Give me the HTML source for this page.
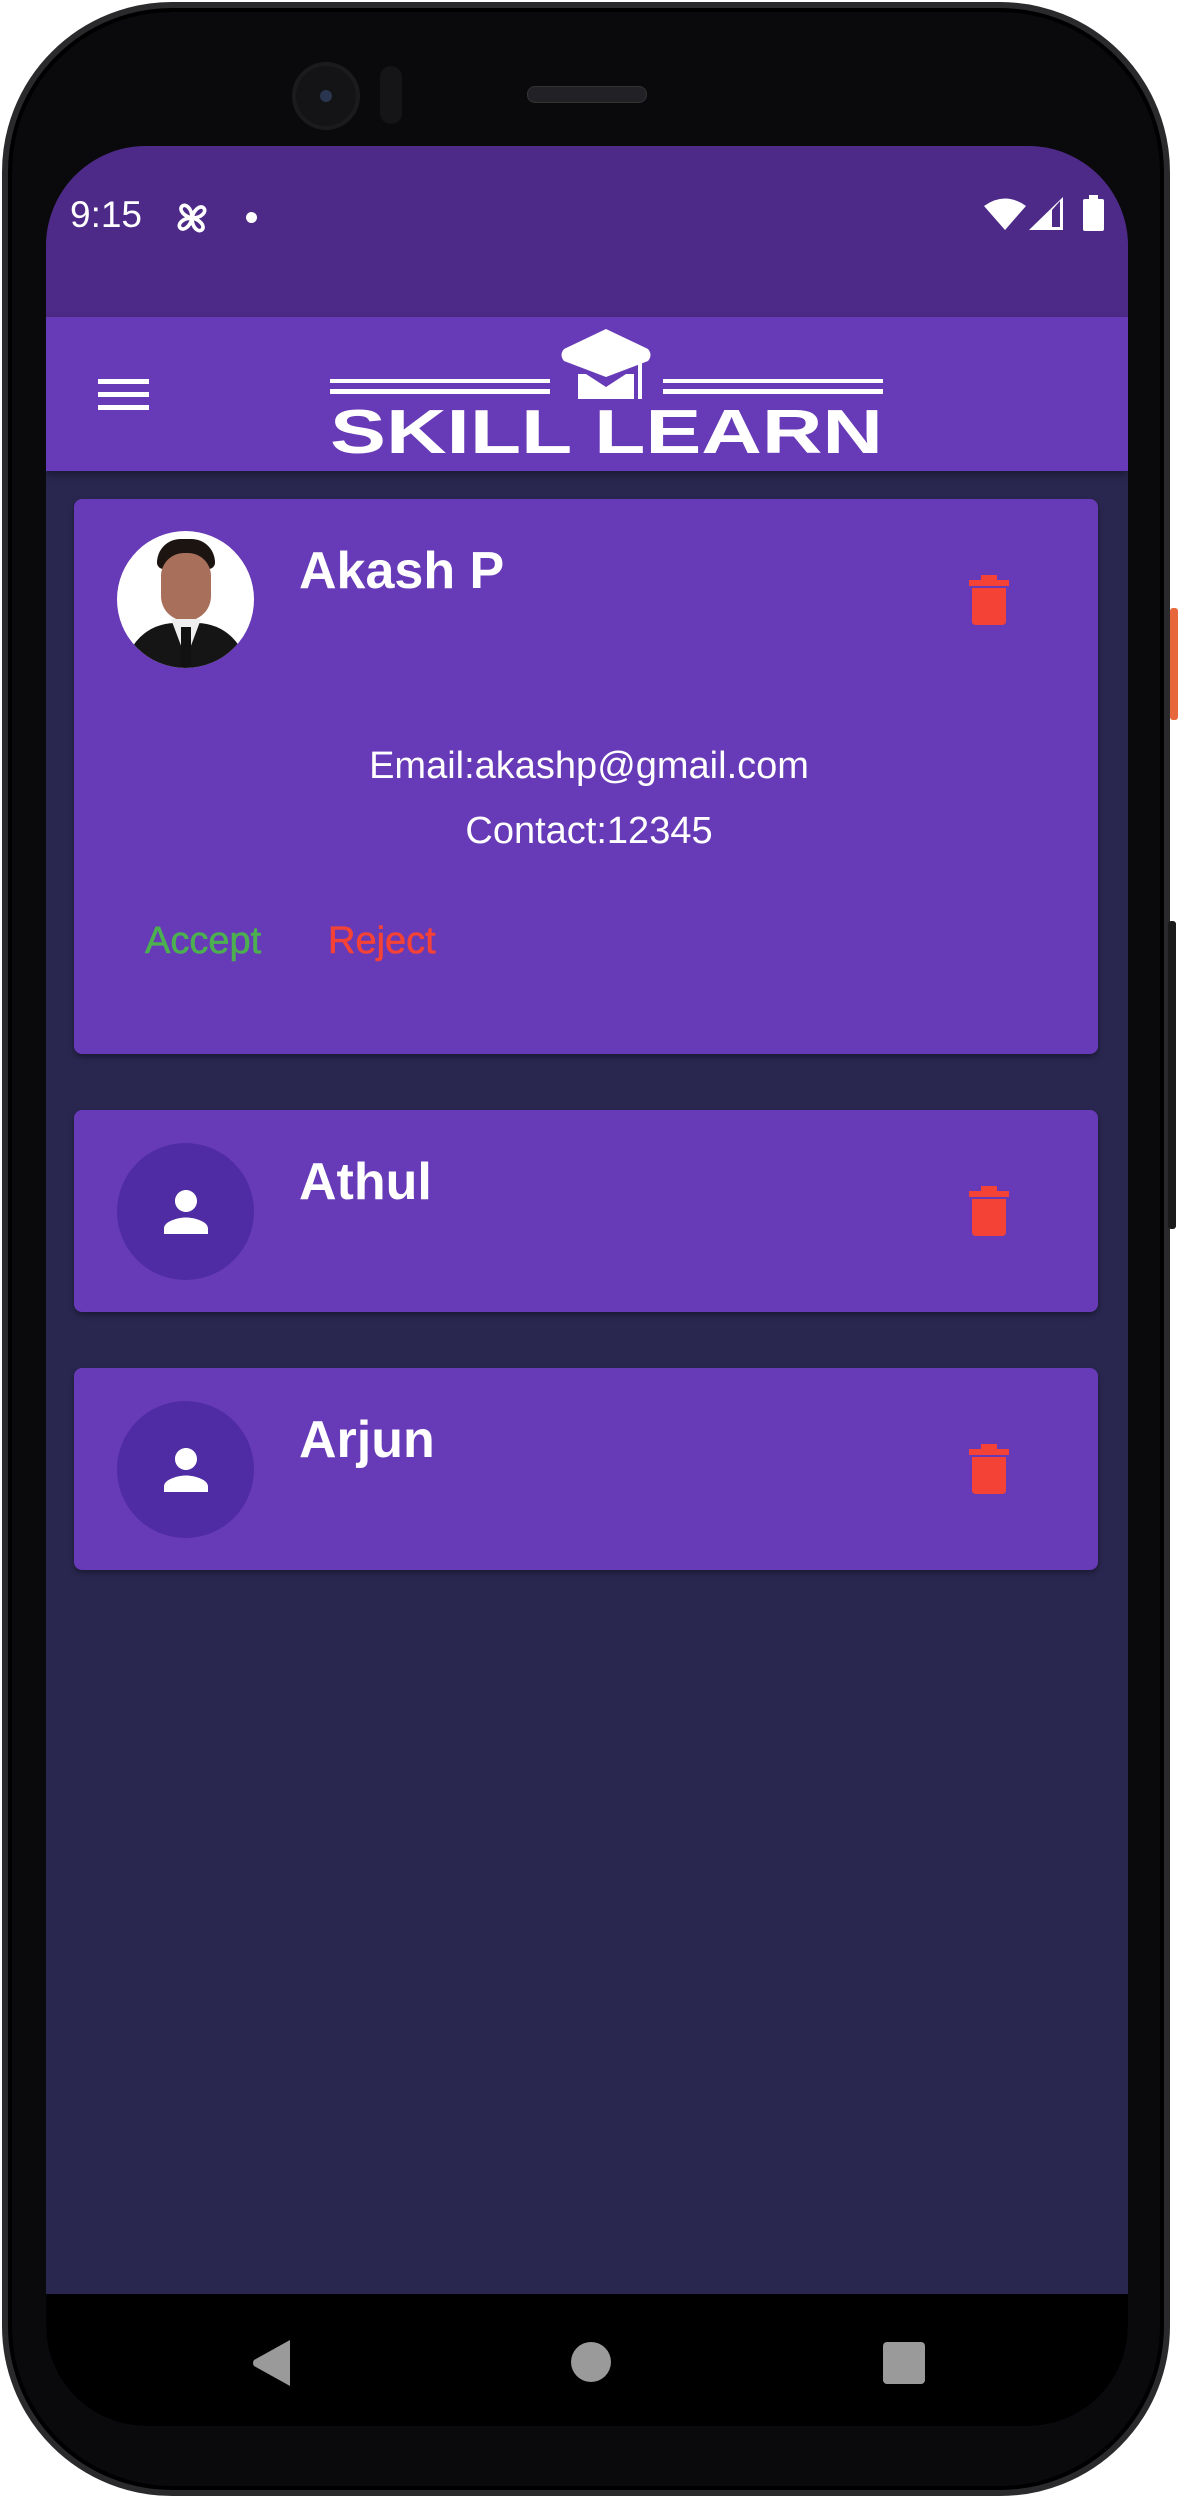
<!DOCTYPE html>
<html><head><meta charset="utf-8"><style>
*{margin:0;padding:0;box-sizing:border-box}
body{width:1178px;height:2498px;background:#fff;position:relative;overflow:hidden;font-family:"Liberation Sans",Roboto,sans-serif}
.frame{position:absolute;left:2px;top:2px;width:1168px;height:2494px;border-radius:170px;background:#0a090b;border:6px solid #2a2a2c;box-shadow:inset 0 0 0 4px #000}
.screen{position:absolute;left:46px;top:146px;width:1082px;height:2280px;border-radius:100px;overflow:hidden;background:#29274f}
.status{position:absolute;left:0;top:0;width:100%;height:171px;background:#4d2a88}
.appbar{position:absolute;left:0;top:171px;width:100%;height:154px;background:#673ab7;box-shadow:0 4px 8px rgba(0,0,0,.35)}
.nav{position:absolute;left:0;top:2148px;width:100%;height:132px;background:#000}
.card{position:absolute;left:28px;width:1024px;background:#673ab7;border-radius:8px;box-shadow:0 3px 6px rgba(0,0,0,.35)}
.av{position:absolute;left:43px;width:137px;height:137px;border-radius:50%;background:#4f2ca3}
.name{position:absolute;left:225px;color:#fff;font-weight:bold;font-size:52px;line-height:1}
.trash{position:absolute;left:895px;width:40px;height:50px}
</style></head><body>
<div class="frame"></div>
<div style="position:absolute;right:0;top:608px;width:8px;height:112px;background:#e8663c;border-radius:3px"></div>
<div style="position:absolute;right:2px;top:921px;width:8px;height:308px;background:#1a1a1a;border-radius:3px"></div>
<div style="position:absolute;left:296px;top:66px;width:60px;height:60px;border-radius:50%;background:#141416;box-shadow:0 0 0 4px #1b1b1e"></div>
<div style="position:absolute;left:320px;top:90px;width:12px;height:12px;border-radius:50%;background:#2a3550"></div>
<div style="position:absolute;left:380px;top:66px;width:22px;height:58px;border-radius:11px;background:#151518"></div>
<div style="position:absolute;left:527px;top:86px;width:120px;height:17px;border-radius:8px;background:#222226;border:1px solid #333"></div>
<div class="screen">
 <div class="status">
  <div style="position:absolute;left:24px;top:48px;color:#fff;font-size:37px">9:15</div>
  <svg style="position:absolute;left:126px;top:52px" width="40" height="40" viewBox="0 0 24 24" fill="none" stroke="#fff" stroke-width="2.2"><path d="M12 12C12 6 8 3 6 5S7 11 12 12ZM12 12C18 12 21 8 19 6S13 7 12 12ZM12 12C12 18 16 21 18 19S17 13 12 12ZM12 12C6 12 3 16 5 18S11 17 12 12Z"/></svg>
  <div style="position:absolute;left:200px;top:66px;width:11px;height:11px;border-radius:50%;background:#fff"></div>
  <svg style="position:absolute;left:938px;top:51px" width="42" height="33" viewBox="0 0 42 33"><path d="M0 9Q21-6 42 9L21 33Z" fill="#fff"/></svg>
  <svg style="position:absolute;left:983px;top:51px" width="34" height="33" viewBox="0 0 34 33"><path d="M34 0V33H0Z" fill="#fff"/><path d="M23 13V30H31V4Z" fill="#4d2a88"/></svg>
  <div style="position:absolute;left:1037px;top:53px;width:21px;height:32px;background:#fff;border-radius:2px"></div>
  <div style="position:absolute;left:1043px;top:49px;width:9px;height:5px;background:#fff"></div>
 </div>
 <div class="appbar">
  <div style="position:absolute;left:52px;top:62px;width:51px;height:5px;background:#fff"></div>
  <div style="position:absolute;left:52px;top:75px;width:51px;height:5px;background:#fff"></div>
  <div style="position:absolute;left:52px;top:88px;width:51px;height:5px;background:#fff"></div>
  <svg style="position:absolute;left:280px;top:12px" width="570" height="130" viewBox="0 0 570 130">
   <g fill="#fff">
    <rect x="4" y="50" width="220" height="4"/><rect x="4" y="60" width="220" height="5"/>
    <rect x="337" y="50" width="220" height="4"/><rect x="337" y="60" width="220" height="5"/>
    <path d="M280 0L322 20Q327 26 322 32L280 48L238 32Q233 26 238 20Z"/>
    <path d="M252 45H260L280 58L300 45H308V70H252Z"/>
    <rect x="312" y="30" width="4" height="40"/>
   </g>
   <text x="4" y="124" textLength="553" lengthAdjust="spacingAndGlyphs" font-family="Liberation Sans" font-weight="bold" font-size="62" fill="#fff">SKILL LEARN</text>
  </svg>
 </div>

 <div class="card" style="top:353px;height:555px">
  <div class="av" style="top:32px;background:#fff;overflow:hidden">
   <div style="position:absolute;left:40px;top:8px;width:58px;height:30px;border-radius:30px 30px 8px 8px;background:#1c1410"></div>
   <div style="position:absolute;left:44px;top:22px;width:50px;height:68px;border-radius:24px 24px 26px 26px;background:#a8705a"></div>
   <div style="position:absolute;left:8px;top:92px;width:122px;height:60px;border-radius:50px 50px 0 0;background:#151515"></div>
   <div style="position:absolute;left:54px;top:88px;width:30px;height:40px;background:#eee;clip-path:polygon(0 0,100% 0,50% 100%)"></div>
   <div style="position:absolute;left:64px;top:96px;width:10px;height:40px;background:#111"></div>
  </div>
  <div class="name" style="top:46px">Akash P</div>
  <svg class="trash" style="top:76px" viewBox="0 0 40 50"><rect x="0" y="5" width="40" height="6" fill="#f44336"/><rect x="12" y="0" width="16" height="6" fill="#f44336"/><path d="M3 13H37V46Q37 50 33 50H7Q3 50 3 46Z" fill="#f44336"/></svg>
  <div style="position:absolute;left:0;width:100%;top:245px;text-align:center;color:#fff;font-size:38px;line-height:44px;padding-left:6px">Email:akashp@gmail.com</div>
  <div style="position:absolute;left:0;width:100%;top:310px;text-align:center;color:#fff;font-size:38px;line-height:44px;padding-left:6px">Contact:12345</div>
  <div style="position:absolute;left:71px;top:420px;color:#4caf50;font-size:38px;line-height:44px;-webkit-text-stroke:0.6px #4caf50">Accept</div>
  <div style="position:absolute;left:254px;top:420px;color:#f44336;font-size:38px;line-height:44px;-webkit-text-stroke:0.6px #f44336">Reject</div>
 </div>

 <div class="card" style="top:964px;height:202px">
  <div class="av" style="top:33px"><svg style="position:absolute;left:36px;top:36px" width="66" height="66" viewBox="0 0 24 24"><path fill="#fff" d="M12 12c2.2 0 4-1.8 4-4s-1.8-4-4-4-4 1.8-4 4 1.8 4 4 4zm0 2c-2.7 0-8 1.3-8 4v2h16v-2c0-2.7-5.3-4-8-4z"/></svg></div>
  <div class="name" style="top:46px">Athul</div>
  <svg class="trash" style="top:76px" viewBox="0 0 40 50"><rect x="0" y="5" width="40" height="6" fill="#f44336"/><rect x="12" y="0" width="16" height="6" fill="#f44336"/><path d="M3 13H37V46Q37 50 33 50H7Q3 50 3 46Z" fill="#f44336"/></svg>
 </div>

 <div class="card" style="top:1222px;height:202px">
  <div class="av" style="top:33px"><svg style="position:absolute;left:36px;top:36px" width="66" height="66" viewBox="0 0 24 24"><path fill="#fff" d="M12 12c2.2 0 4-1.8 4-4s-1.8-4-4-4-4 1.8-4 4 1.8 4 4 4zm0 2c-2.7 0-8 1.3-8 4v2h16v-2c0-2.7-5.3-4-8-4z"/></svg></div>
  <div class="name" style="top:46px">Arjun</div>
  <svg class="trash" style="top:76px" viewBox="0 0 40 50"><rect x="0" y="5" width="40" height="6" fill="#f44336"/><rect x="12" y="0" width="16" height="6" fill="#f44336"/><path d="M3 13H37V46Q37 50 33 50H7Q3 50 3 46Z" fill="#f44336"/></svg>
 </div>

 <div class="nav">
  <svg style="position:absolute;left:206px;top:46px" width="40" height="46" viewBox="0 0 40 46"><path d="M38 0V46L2 26Q0 23 2 20Z" fill="#9a9a9a"/></svg>
  <div style="position:absolute;left:525px;top:48px;width:40px;height:40px;border-radius:50%;background:#9a9a9a"></div>
  <div style="position:absolute;left:837px;top:48px;width:42px;height:42px;border-radius:4px;background:#9a9a9a"></div>
 </div>
</div>
</body></html>
